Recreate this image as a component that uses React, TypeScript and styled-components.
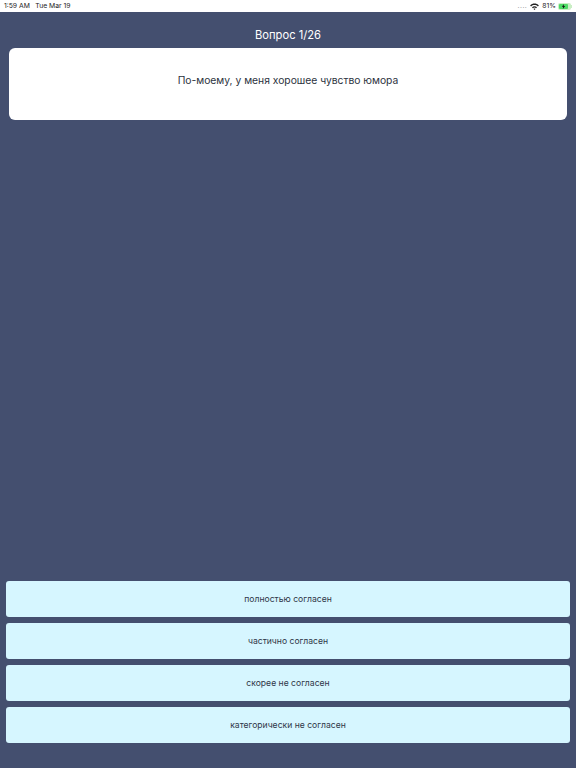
import { createGlobalStyle } from "styled-components"
import styled from "styled-components"

const answers = [
    "полностью согласен",
    "частично согласен",
    "скорее не согласен",
    "категорически не согласен",
]

export default function App() {
    return (
        <Screen>
            <GlobalStyle />
            <StatusBar>
                <StatusGroup>
                    <span>1:59 AM</span>
                    <span>Tue Mar 19</span>
                </StatusGroup>
                <StatusRight>
                    <Dots>....</Dots>
                    <WifiIcon width="9" height="7" viewBox="0 0 10 8">
                        <path d="M0 2.8C2.8 0 7.2 0 10 2.8L8.9 3.9C6.7 1.8 3.3 1.8 1.1 3.9Z" fill="#222" />
                        <path d="M2.1 4.8C3.7 3.2 6.3 3.2 7.9 4.8L6.8 5.9C5.8 4.9 4.2 4.9 3.2 5.9Z" fill="#222" />
                        <path d="M5 8L3.9 6.8C4.5 6.2 5.5 6.2 6.1 6.8Z" fill="#222" />
                    </WifiIcon>
                    <span>81%</span>
                    <Battery>
                        <BatteryLevel>
                            <svg width="5" height="5" viewBox="0 0 5 5">
                                <path d="M3 0L0.8 2.8H2.2L1.8 5L4.2 2.1H2.7Z" fill="#111" />
                            </svg>
                        </BatteryLevel>
                        <BatteryCap />
                    </Battery>
                </StatusRight>
            </StatusBar>
            <Title>Вопрос 1/26</Title>
            <QuestionCard>По-моему, у меня хорошее чувство юмора</QuestionCard>
            <Answers>
                {answers.map(answer => (
                    <AnswerButton key={answer}>{answer}</AnswerButton>
                ))}
            </Answers>
        </Screen>
    )
}

const GlobalStyle = createGlobalStyle`
    html, body {
        margin: 0;
        padding: 0;
    }
    * {
        box-sizing: border-box;
    }
`

const Screen = styled.div`
    width: 576px;
    height: 768px;
    display: flex;
    flex-direction: column;
    background-color: #444f6f;
    font-family: "Inter", "Noto Sans", sans-serif;
    overflow: hidden;
`

const StatusBar = styled.div`
    height: 12px;
    padding: 0 3px 0 4px;
    display: flex;
    justify-content: space-between;
    align-items: center;
    background-color: #ffffff;
    color: #222222;
    font-family: "Inter", sans-serif;
    font-size: 6.8px;
    line-height: 12px;
`

const StatusGroup = styled.div`
    display: flex;
    gap: 5.5px;
`

const StatusRight = styled.div`
    display: flex;
    align-items: center;
    gap: 2px;
`

const Dots = styled.span`
    color: #9a9a9a;
    letter-spacing: 0.5px;
`

const WifiIcon = styled.svg`
    margin: 0 1px;
`

const Battery = styled.div`
    position: relative;
    width: 13px;
    height: 7px;
    padding: 1px;
    margin-right: 2px;
    border-radius: 2px;
    background-color: #c9eec4;
`

const BatteryLevel = styled.div`
    width: 9px;
    height: 5px;
    display: flex;
    align-items: center;
    justify-content: center;
    border-radius: 1px;
    background-color: #4cd964;
`

const BatteryCap = styled.div`
    position: absolute;
    top: 2px;
    right: -1px;
    width: 1px;
    height: 3px;
    background-color: #c9eec4;
`

const Title = styled.div`
    height: 36px;
    padding-top: 14px;
    text-align: center;
    color: #ffffff;
    font-size: 11.2px;
    line-height: 18px;
    font-weight: 400;
`

const QuestionCard = styled.div`
    height: 72px;
    margin: 0 9px;
    padding-top: 23px;
    border-radius: 6px;
    background-color: #ffffff;
    color: #2c3240;
    text-align: center;
    font-size: 10.3px;
    line-height: 18px;
`

const Answers = styled.div`
    margin-top: auto;
    margin-bottom: 25px;
    padding: 0 6px;
    display: flex;
    flex-direction: column;
    gap: 6px;
`

const AnswerButton = styled.button`
    height: 36px;
    width: 100%;
    padding: 0;
    border: none;
    border-radius: 3px;
    background-color: #d6f6ff;
    color: #2f3748;
    font-family: "Inter", sans-serif;
    font-size: 8.6px;
    text-align: center;
`
